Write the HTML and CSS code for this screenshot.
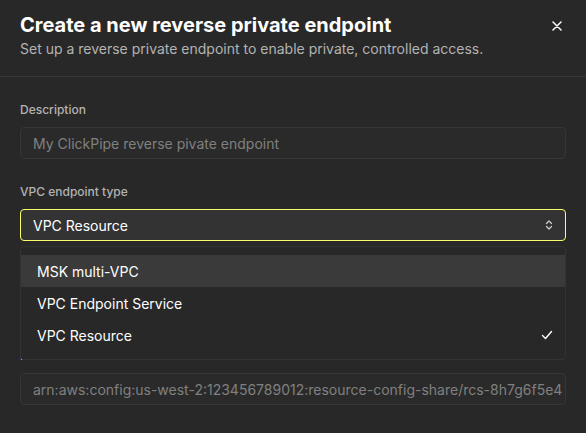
FILE: index.html
```html
<!DOCTYPE html>
<html lang="en">
<head>
<meta charset="utf-8">
<link rel="stylesheet" href="styles.css">
</head>
<body>
<div class="dialog">
  <header class="header">
    <div class="titles">
      <h1 class="title">Create a new reverse private endpoint</h1>
      <p class="subtitle">Set up a reverse private endpoint to enable private, controlled access.</p>
    </div>
    <button class="close" aria-label="Close">
      <svg width="10" height="10" viewBox="0 0 10 10"><path d="M1 1L9 9M9 1L1 9" stroke="#fff" stroke-width="1.5" stroke-linecap="round"/></svg>
    </button>
  </header>
  <div class="body">
    <div class="field">
      <label class="label">Description</label>
      <div class="input placeholder">My ClickPipe reverse pivate endpoint</div>
    </div>
    <div class="field select-field">
      <label class="label">VPC endpoint type</label>
      <div class="select">
        <span>VPC Resource</span>
        <svg width="8" height="12" viewBox="0 0 8 12"><path d="M1.5 4.5L4 2L6.5 4.5M1.5 7.5L4 10L6.5 7.5" fill="none" stroke="#d0d0d0" stroke-width="1.2" stroke-linecap="round" stroke-linejoin="round"/></svg>
      </div>
      <ul class="menu">
        <li class="item active">MSK multi-VPC</li>
        <li class="item">VPC Endpoint Service</li>
        <li class="item">VPC Resource
          <svg width="12" height="10" viewBox="0 0 12 10"><path d="M1.5 5.5L4.5 8.5L10.5 1.5" fill="none" stroke="#fff" stroke-width="1.4" stroke-linecap="round" stroke-linejoin="round"/></svg>
        </li>
      </ul>
    </div>
    <div class="field covered">
      <label class="label">Resource configuration ID</label>
      <div class="input placeholder">rcfg-1a2b3c4d5e6f7g8h9</div>
    </div>
    <div class="field">
      <label class="label">Resource share ARN</label>
      <div class="input placeholder">arn:aws:config:us-west-2:123456789012:resource-config-share/rcs-8h7g6f5e4</div>
    </div>
  </div>
</div>
</body>
</html>
```

FILE: styles.css
```css
* { box-sizing: border-box; }
html, body {
  margin: 0;
  padding: 0;
  background: #282828;
  font-family: Inter, "Noto Sans", sans-serif;
  color: #fff;
  overflow: hidden;
}
.dialog {
  width: 586px;
  height: 433px;
}
.header {
  display: flex;
  justify-content: space-between;
  align-items: flex-start;
  padding: 12px 20px 0;
  height: 77px;
  border-bottom: 1px solid #363636;
}
.title {
  margin: 0;
  font-size: 20px;
  line-height: 26px;
  font-weight: 700;
}
.subtitle {
  margin: 0;
  font-size: 14px;
  line-height: 22px;
  color: #b3b3b3;
}
.close {
  background: none;
  border: 0;
  padding: 0;
  margin: 8px 3px 0 0;
  width: 12px;
  height: 12px;
  display: flex;
  align-items: center;
  justify-content: center;
}
.body {
  padding: 25px 20px 0;
  display: flex;
  flex-direction: column;
  gap: 25px;
}
.field {
  display: flex;
  flex-direction: column;
  gap: 9px;
}
.select-field { position: relative; }
.covered { visibility: hidden; }
.label {
  font-size: 12px;
  line-height: 16px;
  font-weight: 500;
  color: #b3b3b3;
}
.input {
  height: 32px;
  border: 1px solid #363636;
  border-radius: 4px;
  background: #2a2a2a;
  padding: 0 12px;
  display: flex;
  align-items: center;
  font-size: 14px;
  white-space: nowrap;
  overflow: hidden;
}
.placeholder { color: #808080; }
.select {
  height: 32px;
  border: 1px solid #faff69;
  border-radius: 4px;
  background: #333333;
  padding: 0 12px 0 12px;
  display: flex;
  align-items: center;
  justify-content: space-between;
  font-size: 14px;
  color: #fff;
}
.menu {
  position: absolute;
  left: 0;
  right: 0;
  top: 62px;
  margin: 0;
  padding: 8px 0;
  list-style: none;
  background: #282828;
  border: 1px solid #333333;
  border-radius: 4px;
  z-index: 2;
}
.item {
  height: 32px;
  padding: 0 12px 0 16px;
  display: flex;
  align-items: center;
  justify-content: space-between;
  font-size: 14px;
  color: #fff;
}
.item.active { background: #3a3a3a; }
```
